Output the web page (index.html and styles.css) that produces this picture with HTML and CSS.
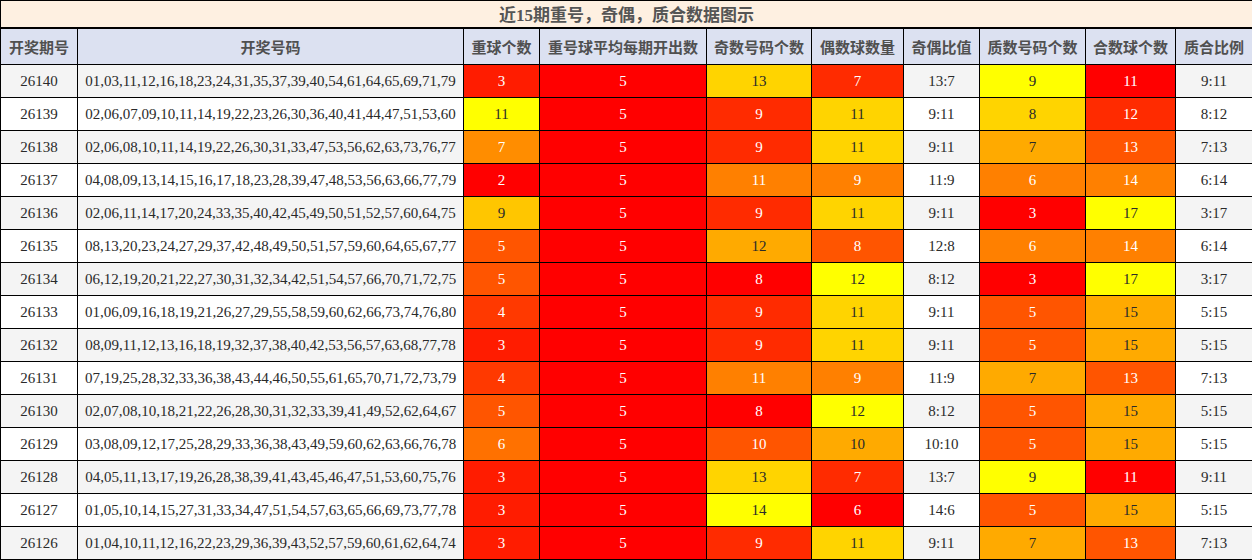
FILE: index.html
```html
<!DOCTYPE html>
<html lang="zh">
<head>
<meta charset="utf-8">
<title>近15期重号，奇偶，质合数据图示</title>
<link rel="stylesheet" href="styles.css">
</head>
<body>
<table class="grid">
<colgroup>
<col class="c1"><col class="c2"><col class="c3"><col class="c4"><col class="c5"><col class="c6"><col class="c7"><col class="c8"><col class="c9"><col class="c10">
</colgroup>
<tr class="title"><td colspan="10">近15期重号，奇偶，质合数据图示</td></tr>
<tr class="head"><th>开奖期号</th><th>开奖号码</th><th>重球个数</th><th>重号球平均每期开出数</th><th>奇数号码个数</th><th>偶数球数量</th><th>奇偶比值</th><th>质数号码个数</th><th>合数球个数</th><th>质合比例</th></tr>
<tr class="odd"><td>26140</td><td class="nums">01,03,11,12,16,18,23,24,31,35,37,39,40,54,61,64,65,69,71,79</td><td class="w" style="background:#FF1C00">3</td><td class="w" style="background:#FF0000">5</td><td style="background:#FFD400">13</td><td class="w" style="background:#FF2B00">7</td><td>13:7</td><td style="background:#FFFF00">9</td><td class="w" style="background:#FF0000">11</td><td>9:11</td></tr>
<tr class="even"><td>26139</td><td class="nums">02,06,07,09,10,11,14,19,22,23,26,30,36,40,41,44,47,51,53,60</td><td style="background:#FFFF00">11</td><td class="w" style="background:#FF0000">5</td><td class="w" style="background:#FF2B00">9</td><td style="background:#FFD400">11</td><td>9:11</td><td style="background:#FFD400">8</td><td class="w" style="background:#FF2B00">12</td><td>8:12</td></tr>
<tr class="odd"><td>26138</td><td class="nums">02,06,08,10,11,14,19,22,26,30,31,33,47,53,56,62,63,73,76,77</td><td class="w" style="background:#FF8D00">7</td><td class="w" style="background:#FF0000">5</td><td class="w" style="background:#FF2B00">9</td><td style="background:#FFD400">11</td><td>9:11</td><td style="background:#FFAA00">7</td><td class="w" style="background:#FF5500">13</td><td>7:13</td></tr>
<tr class="even"><td>26137</td><td class="nums">04,08,09,13,14,15,16,17,18,23,28,39,47,48,53,56,63,66,77,79</td><td class="w" style="background:#FF0000">2</td><td class="w" style="background:#FF0000">5</td><td class="w" style="background:#FF8000">11</td><td class="w" style="background:#FF8000">9</td><td>11:9</td><td class="w" style="background:#FF8000">6</td><td class="w" style="background:#FF8000">14</td><td>6:14</td></tr>
<tr class="odd"><td>26136</td><td class="nums">02,06,11,14,17,20,24,33,35,40,42,45,49,50,51,52,57,60,64,75</td><td style="background:#FFC600">9</td><td class="w" style="background:#FF0000">5</td><td class="w" style="background:#FF2B00">9</td><td style="background:#FFD400">11</td><td>9:11</td><td class="w" style="background:#FF0000">3</td><td style="background:#FFFF00">17</td><td>3:17</td></tr>
<tr class="even"><td>26135</td><td class="nums">08,13,20,23,24,27,29,37,42,48,49,50,51,57,59,60,64,65,67,77</td><td class="w" style="background:#FF5500">5</td><td class="w" style="background:#FF0000">5</td><td style="background:#FFAA00">12</td><td class="w" style="background:#FF5500">8</td><td>12:8</td><td class="w" style="background:#FF8000">6</td><td class="w" style="background:#FF8000">14</td><td>6:14</td></tr>
<tr class="odd"><td>26134</td><td class="nums">06,12,19,20,21,22,27,30,31,32,34,42,51,54,57,66,70,71,72,75</td><td class="w" style="background:#FF5500">5</td><td class="w" style="background:#FF0000">5</td><td class="w" style="background:#FF0000">8</td><td style="background:#FFFF00">12</td><td>8:12</td><td class="w" style="background:#FF0000">3</td><td style="background:#FFFF00">17</td><td>3:17</td></tr>
<tr class="even"><td>26133</td><td class="nums">01,06,09,16,18,19,21,26,27,29,55,58,59,60,62,66,73,74,76,80</td><td class="w" style="background:#FF3900">4</td><td class="w" style="background:#FF0000">5</td><td class="w" style="background:#FF2B00">9</td><td style="background:#FFD400">11</td><td>9:11</td><td class="w" style="background:#FF5500">5</td><td style="background:#FFAA00">15</td><td>5:15</td></tr>
<tr class="odd"><td>26132</td><td class="nums">08,09,11,12,13,16,18,19,32,37,38,40,42,53,56,57,63,68,77,78</td><td class="w" style="background:#FF1C00">3</td><td class="w" style="background:#FF0000">5</td><td class="w" style="background:#FF2B00">9</td><td style="background:#FFD400">11</td><td>9:11</td><td class="w" style="background:#FF5500">5</td><td style="background:#FFAA00">15</td><td>5:15</td></tr>
<tr class="even"><td>26131</td><td class="nums">07,19,25,28,32,33,36,38,43,44,46,50,55,61,65,70,71,72,73,79</td><td class="w" style="background:#FF3900">4</td><td class="w" style="background:#FF0000">5</td><td class="w" style="background:#FF8000">11</td><td class="w" style="background:#FF8000">9</td><td>11:9</td><td style="background:#FFAA00">7</td><td class="w" style="background:#FF5500">13</td><td>7:13</td></tr>
<tr class="odd"><td>26130</td><td class="nums">02,07,08,10,18,21,22,26,28,30,31,32,33,39,41,49,52,62,64,67</td><td class="w" style="background:#FF5500">5</td><td class="w" style="background:#FF0000">5</td><td class="w" style="background:#FF0000">8</td><td style="background:#FFFF00">12</td><td>8:12</td><td class="w" style="background:#FF5500">5</td><td style="background:#FFAA00">15</td><td>5:15</td></tr>
<tr class="even"><td>26129</td><td class="nums">03,08,09,12,17,25,28,29,33,36,38,43,49,59,60,62,63,66,76,78</td><td class="w" style="background:#FF7100">6</td><td class="w" style="background:#FF0000">5</td><td class="w" style="background:#FF5500">10</td><td style="background:#FFAA00">10</td><td>10:10</td><td class="w" style="background:#FF5500">5</td><td style="background:#FFAA00">15</td><td>5:15</td></tr>
<tr class="odd"><td>26128</td><td class="nums">04,05,11,13,17,19,26,28,38,39,41,43,45,46,47,51,53,60,75,76</td><td class="w" style="background:#FF1C00">3</td><td class="w" style="background:#FF0000">5</td><td style="background:#FFD400">13</td><td class="w" style="background:#FF2B00">7</td><td>13:7</td><td style="background:#FFFF00">9</td><td class="w" style="background:#FF0000">11</td><td>9:11</td></tr>
<tr class="even"><td>26127</td><td class="nums">01,05,10,14,15,27,31,33,34,47,51,54,57,63,65,66,69,73,77,78</td><td class="w" style="background:#FF1C00">3</td><td class="w" style="background:#FF0000">5</td><td style="background:#FFFF00">14</td><td class="w" style="background:#FF0000">6</td><td>14:6</td><td class="w" style="background:#FF5500">5</td><td style="background:#FFAA00">15</td><td>5:15</td></tr>
<tr class="odd"><td>26126</td><td class="nums">01,04,10,11,12,16,22,23,29,36,39,43,52,57,59,60,61,62,64,74</td><td class="w" style="background:#FF1C00">3</td><td class="w" style="background:#FF0000">5</td><td class="w" style="background:#FF2B00">9</td><td style="background:#FFD400">11</td><td>9:11</td><td style="background:#FFAA00">7</td><td class="w" style="background:#FF5500">13</td><td>7:13</td></tr>
</table>
</body>
</html>
```
FILE: styles.css
```css
html, body {
  margin: 0;
  padding: 0;
  background: #ffffff;
}
body {
  font-family: "Liberation Serif", "Noto Sans CJK SC", serif;
}
.grid {
  border-collapse: collapse;
  table-layout: fixed;
  width: 1252px;
}
.c1 { width: 77px; }
.c2 { width: 386px; }
.c3 { width: 76px; }
.c4 { width: 167px; }
.c5 { width: 105px; }
.c6 { width: 92px; }
.c7 { width: 76px; }
.c8 { width: 106px; }
.c9 { width: 90px; }
.c10 { width: 77px; }
.grid td, .grid th {
  border: 1px solid #000;
  padding: 0;
  text-align: center;
  vertical-align: middle;
  font-size: 15px;
  color: #2a2a2a;
  white-space: nowrap;
  overflow: hidden;
}
.title { height: 27px; }
.title td {
  background: #fef0e1;
  border-bottom: 2px solid #000;
  font-size: 17px;
  font-weight: bold;
  color: #555555;
  font-family: "Liberation Serif", "Noto Sans CJK SC", serif;
}
.head { height: 37px; }
.head th {
  background: #dce1f1;
  font-weight: bold;
  color: #505050;
  font-family: "Noto Sans CJK SC", sans-serif;
}
.odd, .even { height: 33px; }
.odd td { background: #f4f4f4; }
.even td { background: #ffffff; }
.grid td.w { color: #ffffff; }
```
